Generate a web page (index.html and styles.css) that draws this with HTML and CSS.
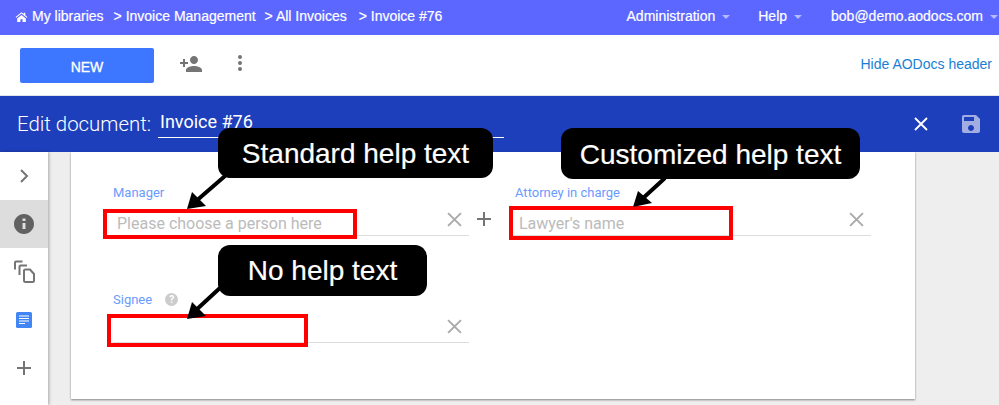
FILE: index.html
```html
<!DOCTYPE html>
<html>
<head>
<meta charset="utf-8">
<title>Invoice #76</title>
<link rel="stylesheet" href="styles.css">
</head>
<body>
<div class="page">
  <div class="topbar">
    <div class="crumbs">
      <svg class="home" viewBox="0 0 24 20"><path d="M12 2 1 11l1.3 1.5L12 4.6l9.700 7.900L23 11l-4-3.300V3h-3v2.200zM4 13.500V20h6v-5h4v5h6v-6.500L12 7z"/></svg>
      <span class="crumb-first">My libraries</span>
      <span>&gt; Invoice Management</span>
      <span>&gt; All Invoices</span>
      <span class="crumb-last">&gt; Invoice #76</span>
    </div>
    <div class="menus">
      <span class="menu menu-admin">Administration<i class="caret"></i></span>
      <span class="menu menu-help">Help<i class="caret"></i></span>
      <span class="menu">bob@demo.aodocs.com<i class="caret"></i></span>
    </div>
  </div>

  <div class="toolbar">
    <button class="new-btn">NEW</button>
    <svg class="icon-share" viewBox="0 0 24 24"><path d="M15 12c2.210 0 4-1.790 4-4s-1.790-4-4-4-4 1.790-4 4 1.790 4 4 4zm-9-2V7H4v3H1v2h3v3h2v-3h3v-2H6zm9 4c-2.670 0-8 1.340-8 4v2h16v-2c0-2.660-5.330-4-8-4z"/></svg>
    <svg class="icon-dots" viewBox="0 0 6 18"><circle cx="3" cy="3" r="2"/><circle cx="3" cy="9" r="2"/><circle cx="3" cy="15" r="2"/></svg>
    <a class="hide-link">Hide AODocs header</a>
  </div>

  <div class="editbar">
    <span class="edit-label">Edit document:</span>
    <div class="edit-title">Invoice #76</div>
    <svg class="icon-close" viewBox="0 0 14 14"><path d="M1 1l12 12M13 1 1 13"/></svg>
    <svg class="icon-save" viewBox="0 0 24 24"><path d="M17 3H5c-1.110 0-2 .9-2 2v14c0 1.100.89 2 2 2h14c1.100 0 2-.9 2-2V7l-4-4zm-5 16c-1.660 0-3-1.340-3-3s1.340-3 3-3 3 1.340 3 3-1.340 3-3 3zm3-10H5V5h10v4z"/></svg>
  </div>

  <div class="main">
    <div class="sidebar">
      <div class="side-item">
        <svg class="side-icon" viewBox="0 0 24 24"><path class="line" d="M9 6l6 6-6 6"/></svg>
      </div>
      <div class="side-item active">
        <svg class="side-icon info" viewBox="0 0 24 24"><path d="M12 2C6.480 2 2 6.480 2 12s4.480 10 10 10 10-4.480 10-10S17.520 2 12 2zm1.500 15h-3v-6h3v6zm0-8h-3V6.500h3V9z"/></svg>
      </div>
      <div class="side-item">
        <svg class="side-icon" viewBox="0 0 24 24"><path class="line" d="M3 9.500V2.500C3 2 3.500 1.500 4 1.500h6.500M7.500 15V6.500C7.500 6 8 5.500 8.500 5.500h6.500M12 10.500v10c0 .8.700 1.500 1.500 1.500h7c.8 0 1.500-.7 1.500-1.500v-6.500l-4-4.500h-4.500c-.8 0-1.500.7-1.500 1z"/></svg>
      </div>
      <div class="side-item">
        <svg class="side-icon" viewBox="0 0 24 24"><rect x="4" y="4" width="16" height="16" rx="1.500" fill="#4285f4"/><path d="M7 8h10M7 10.500h10M7 13h10M7 15.500h6" stroke="#fff" stroke-width="1.100" fill="none"/></svg>
      </div>
      <div class="side-item">
        <svg class="side-icon" viewBox="0 0 24 24"><path class="line" d="M5 12h14M12 5v14"/></svg>
      </div>
    </div>

    <div class="card">
      <div class="row">
        <div class="field">
          <div class="field-label">Manager</div>
          <div class="field-input">
            <span class="placeholder">Please choose a person here</span>
            <svg class="icon-clear" viewBox="0 0 14 14"><path d="M1 1l12 12M13 1 1 13"/></svg>
          </div>
        </div>
        <div class="add-col">
          <svg class="icon-add" viewBox="0 0 16 16"><path d="M1 8h14M8 1v14"/></svg>
        </div>
        <div class="field field-wide">
          <div class="field-label label-shift">Attorney in charge</div>
          <div class="field-input">
            <span class="placeholder placeholder-shift">Lawyer's name</span>
            <svg class="icon-clear" viewBox="0 0 14 14"><path d="M1 1l12 12M13 1 1 13"/></svg>
          </div>
        </div>
      </div>
      <div class="row">
        <div class="field">
          <div class="field-label">Signee <span class="help-dot">?</span></div>
          <div class="field-input">
            <span class="placeholder"></span>
            <svg class="icon-clear" viewBox="0 0 14 14"><path d="M1 1l12 12M13 1 1 13"/></svg>
          </div>
        </div>
      </div>
    </div>
  </div>

  <!-- annotations drawn on top of the screenshot -->
  <div class="redbox box-manager"></div>
  <div class="redbox box-lawyer"></div>
  <div class="redbox box-signee"></div>
  <svg class="arrows" viewBox="0 0 999 405">
    <path d="M225 176 195 202M665 178 641 200M221 287 195 311"/>
    <polygon points="187,209 192,192 206,206"/>
    <polygon points="633,207 638,191 652,203"/>
    <polygon points="187,319 192,302 206,316"/>
  </svg>
  <div class="callout call-standard">Standard help text</div>
  <div class="callout call-custom">Customized help text</div>
  <div class="callout call-none">No help text</div>
</div>
</body>
</html>
```

FILE: styles.css
```css
html, body {
  margin: 0;
  padding: 0;
  height: 100%;
  overflow: hidden;
}
body {
  font-family: "Liberation Sans", Arial, sans-serif;
  background: #eee;
}
.page {
  position: relative;
  display: flex;
  flex-direction: column;
  width: 999px;
  height: 405px;
  overflow: hidden;
}

/* top bar */
.topbar {
  display: flex;
  justify-content: space-between;
  align-items: center;
  flex: none;
  height: 35px;
  padding: 0 1px 3px 15px;
  box-sizing: border-box;
  background: #5c67ff;
  color: #fff;
  font-size: 14px;
  -webkit-text-stroke: 0.2px #fff;
}
.crumbs {
  display: flex;
  align-items: center;
  gap: 9px;
}
.home {
  width: 13px;
  height: 11px;
  margin-right: -5px;
  fill: #fff;
}
.crumb-first {
  margin-right: 1px;
}
.crumb-last {
  margin-left: 3px;
}
.menus {
  display: flex;
  align-items: center;
}
.menu {
  display: flex;
  align-items: center;
}
.menu-admin {
  margin-right: 28px;
}
.menu-help {
  margin-right: 29px;
}
.caret {
  width: 0;
  height: 0;
  margin: 1px 0 0 7px;
  border-left: 4px solid transparent;
  border-right: 4px solid transparent;
  border-top: 4px solid rgba(255, 255, 255, 0.55);
}

/* toolbar */
.toolbar {
  display: flex;
  align-items: center;
  flex: none;
  height: 61px;
  padding: 0 7px 0 20px;
  box-sizing: border-box;
  background: #fff;
  border-bottom: 1px solid #dfe3ee;
}
.new-btn {
  width: 134px;
  height: 35px;
  margin-top: 1px;
  padding: 2px 0 0;
  border: 0;
  border-radius: 2px;
  background: #3d76ff;
  color: #fff;
  font-family: inherit;
  font-size: 14px;
  -webkit-text-stroke: 0.3px #fff;
}
.icon-share {
  width: 24px;
  height: 24px;
  margin: -3px 0 0 25px;
  fill: #757575;
}
.icon-dots {
  width: 6px;
  height: 18px;
  margin: -4px 0 0 34px;
  fill: #757575;
}
.hide-link {
  margin: -2px 0 0 auto;
  color: #1a7fd4;
  font-size: 14px;
}

/* edit bar */
.editbar {
  display: flex;
  align-items: center;
  flex: none;
  height: 56px;
  padding: 0 16px 0 17px;
  box-sizing: border-box;
  background: #1e3fbb;
  color: #fff;
}
.edit-label {
  font-family: Roboto, sans-serif;
  font-size: 20.400px;
  font-weight: 300;
}
.edit-title {
  width: 346px;
  height: 28px;
  margin: 0 0 0 7px;
  padding-left: 2px;
  box-sizing: border-box;
  border-bottom: 1px solid #fff;
  font-family: Roboto, sans-serif;
  font-size: 18px;
  line-height: 24px;
}
.icon-close {
  width: 14px;
  height: 14px;
  margin: 0 0 0 auto;
  fill: none;
  stroke: #fff;
  stroke-width: 1.800;
}
.icon-save {
  width: 24px;
  height: 24px;
  margin-left: 31px;
  fill: #a2aee2;
}

/* sidebar and card */
.main {
  display: flex;
  flex: 1;
  min-height: 0;
}
.sidebar {
  flex: none;
  width: 48px;
  background: #fff;
  box-shadow: 1px 0 3px rgba(0, 0, 0, 0.3);
}
.side-item {
  display: flex;
  align-items: center;
  justify-content: center;
  height: 48px;
}
.side-item.active {
  background: #ddd;
}
.side-icon {
  width: 24px;
  height: 24px;
  fill: #757575;
}
.side-icon .line {
  fill: none;
  stroke: #757575;
  stroke-width: 2;
}
.info {
  fill: #616161;
}
.card {
  flex: none;
  width: 844px;
  height: 247px;
  margin-left: 23px;
  padding: 32px 0 0 42px;
  box-sizing: border-box;
  background: #fff;
  box-shadow: 0 1px 2px rgba(0, 0, 0, 0.45);
}
.row {
  display: flex;
  height: 107.500px;
}
.field {
  width: 356px;
}
.field-wide {
  width: 358px;
}
.field-label {
  display: flex;
  align-items: center;
  height: 16px;
  color: #6a9bff;
  font-family: Roboto, sans-serif;
  font-size: 13px;
}
.label-shift {
  padding-left: 2px;
}
.help-dot {
  display: flex;
  align-items: center;
  justify-content: center;
  width: 13px;
  height: 13px;
  margin-left: 13px;
  border-radius: 50%;
  background: #ccc;
  color: #fff;
  font-size: 10px;
  font-weight: bold;
}
.field-input {
  display: flex;
  align-items: center;
  justify-content: space-between;
  height: 35.500px;
  padding: 0 7px 0 4px;
  box-sizing: border-box;
  border-bottom: 1px solid #ddd;
}
.placeholder {
  margin-top: 12px;
  color: #bbb;
  font-family: Roboto, sans-serif;
  font-size: 16px;
}
.placeholder-shift {
  margin-left: 2px;
}
.icon-clear {
  width: 15px;
  height: 15px;
  margin-top: 4px;
  fill: none;
  stroke: #aaa;
  stroke-width: 1.800;
}
.add-col {
  display: flex;
  justify-content: flex-start;
  width: 44px;
  padding: 27px 0 0 7px;
  box-sizing: border-box;
}
.icon-add {
  width: 16px;
  height: 16px;
  fill: none;
  stroke: #757575;
  stroke-width: 2;
}

/* annotations */
.redbox {
  position: absolute;
  box-sizing: border-box;
  border: 4px solid #f00;
}
.box-manager {
  left: 103px;
  top: 209px;
  width: 254px;
  height: 30px;
}
.box-lawyer {
  left: 509px;
  top: 206px;
  width: 224px;
  height: 34px;
}
.box-signee {
  left: 107px;
  top: 314px;
  width: 201px;
  height: 33px;
}
.arrows {
  position: absolute;
  left: 0;
  top: 0;
  width: 999px;
  height: 405px;
  fill: #000;
}
.arrows path {
  fill: none;
  stroke: #000;
  stroke-width: 4;
}
.callout {
  position: absolute;
  display: flex;
  align-items: center;
  justify-content: center;
  box-sizing: border-box;
  border-radius: 12px;
  background: #000;
  color: #fff;
  font-size: 28px;
  -webkit-text-stroke: 0.2px #fff;
}
.call-standard {
  left: 218px;
  top: 128px;
  width: 275px;
  height: 50px;
  padding-top: 1px;
}
.call-custom {
  left: 561px;
  top: 128px;
  width: 299px;
  height: 51px;
  padding-top: 2px;
}
.call-none {
  left: 218px;
  top: 245px;
  width: 209px;
  height: 51px;
  padding-top: 1px;
}
```
